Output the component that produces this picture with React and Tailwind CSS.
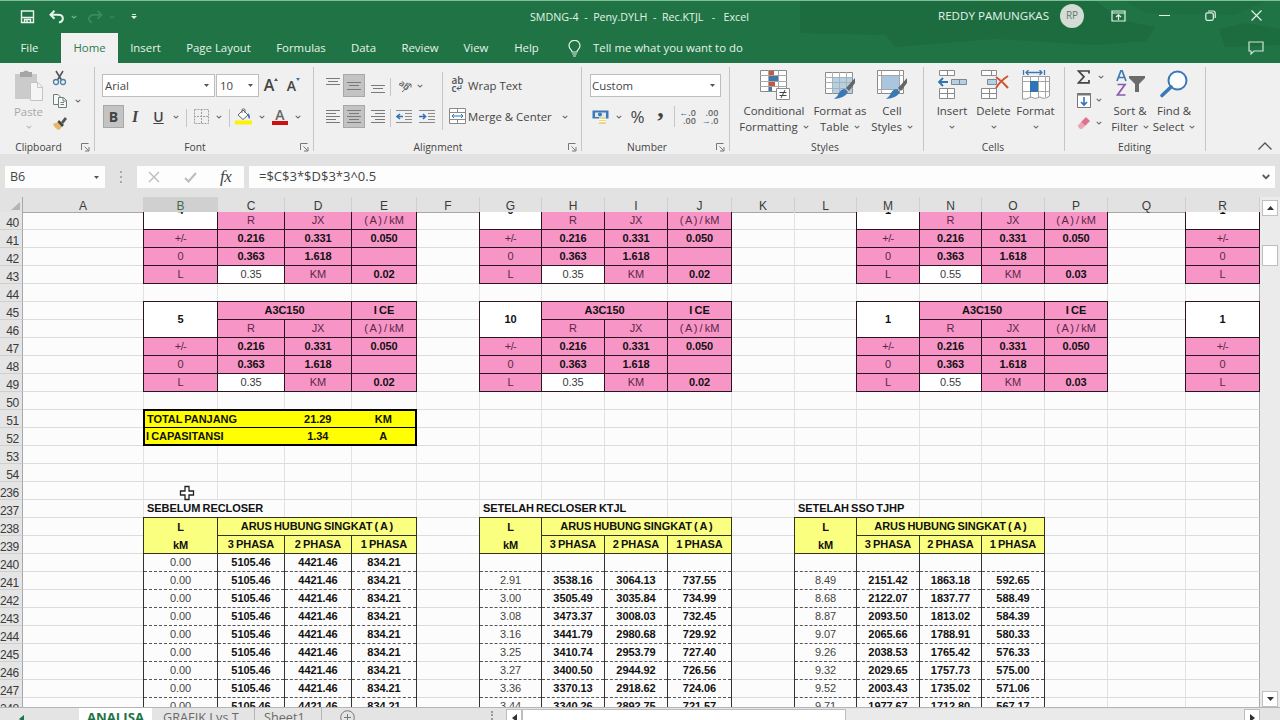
import clsx from 'clsx';

const COLS = 'ABCDEFGHIJKLMNOPQR'.split('');
const ROWS = [40, 41, 42, 43, 44, 45, 46, 47, 48, 49, 50, 51, 52, 53, 54, 236, 237, 238, 239, 240, 241, 242, 243, 244, 245, 246, 247, 248];
const GRID = 'grid grid-cols-[23px_121px_74px_67px_67px_65px_63px_62px_63px_63px_64px_63px_62px_63px_62px_63px_63px_78px_74px]';

// line constants of the feeder, one block per section
const BLOCKS = [
    { cols: ['B', 'C', 'D', 'E'], prev: '4', no: '5', length: '0.35', ice: '0.02' },
    { cols: ['G', 'H', 'I', 'J'], prev: '9', no: '10', length: '0.35', ice: '0.02' },
    { cols: ['M', 'N', 'O', 'P'], prev: '1', no: '1', length: '0.55', ice: '0.03' },
    { cols: ['R'], prev: '1', no: '1' }
];

const FAULTS = [
    {
        title: 'SEBELUM RECLOSER',
        cols: ['B', 'C', 'D', 'E'],
        data: Array(9).fill(['0.00', '5105.46', '4421.46', '834.21'])
    },
    {
        title: 'SETELAH RECLOSER KTJL',
        cols: ['G', 'H', 'I', 'J'],
        data: [
            ['', '', '', ''],
            ['2.91', '3538.16', '3064.13', '737.55'],
            ['3.00', '3505.49', '3035.84', '734.99'],
            ['3.08', '3473.37', '3008.03', '732.45'],
            ['3.16', '3441.79', '2980.68', '729.92'],
            ['3.25', '3410.74', '2953.79', '727.40'],
            ['3.27', '3400.50', '2944.92', '726.56'],
            ['3.36', '3370.13', '2918.62', '724.06'],
            ['3.44', '3340.26', '2892.75', '721.57']
        ]
    },
    {
        title: 'SETELAH SSO TJHP',
        cols: ['L', 'M', 'N', 'O'],
        data: [
            ['', '', '', ''],
            ['8.49', '2151.42', '1863.18', '592.65'],
            ['8.68', '2122.07', '1837.77', '588.49'],
            ['8.87', '2093.50', '1813.02', '584.39'],
            ['9.07', '2065.66', '1788.91', '580.33'],
            ['9.26', '2038.53', '1765.42', '576.33'],
            ['9.32', '2029.65', '1757.73', '575.00'],
            ['9.52', '2003.43', '1735.02', '571.06'],
            ['9.71', '1977.67', '1712.80', '567.17']
        ]
    }
];

function place(col, row, colSpan = 1, rowSpan = 1) {
    return {
        gridColumn: `${COLS.indexOf(col) + 2} / span ${colSpan}`,
        gridRow: `${ROWS.indexOf(row) + 1} / span ${rowSpan}`
    };
}

function Cell({ col, row, cs, rs, className, children }) {
    return (
        <div
            style={place(col, row, cs, rs)}
            className={clsx('-ml-px -mt-px flex items-center justify-center border whitespace-nowrap', className)}
        >
            {children}
        </div>
    );
}

function PinkRows({ cols, start, length, ice }) {
    const [a, b, c, d] = cols;
    const label = 'bg-[#f895c7] border-[#2a1420] text-[#5a2846]';
    const value = 'bg-[#f895c7] border-[#2a1420] font-bold';
    return (
        <>
            <Cell col={a} row={start} className={label}><span className="tracking-[-0.6px]">+/-</span></Cell>
            <Cell col={a} row={start + 1} className={label}>0</Cell>
            <Cell col={a} row={start + 2} className={label}>L</Cell>
            {b && (
                <>
                    <Cell col={b} row={start - 1} className={label}>R</Cell>
                    <Cell col={c} row={start - 1} className={label}>JX</Cell>
                    <Cell col={d} row={start - 1} className={label}>( A ) / kM</Cell>
                    <Cell col={b} row={start} className={value}>0.216</Cell>
                    <Cell col={c} row={start} className={value}>0.331</Cell>
                    <Cell col={d} row={start} className={value}>0.050</Cell>
                    <Cell col={b} row={start + 1} className={value}>0.363</Cell>
                    <Cell col={c} row={start + 1} className={value}>1.618</Cell>
                    <Cell col={d} row={start + 1} className={value} />
                    <Cell col={b} row={start + 2} className="border-[#2a1420] bg-white text-[#3c3c3c]">{length}</Cell>
                    <Cell col={c} row={start + 2} className={label}>KM</Cell>
                    <Cell col={d} row={start + 2} className={value}>{ice}</Cell>
                </>
            )}
        </>
    );
}

function LineBlock({ cols, prev, no, length, ice }) {
    const head = 'bg-[#f895c7] border-[#2a1420] font-bold';
    return (
        <>
            <div style={place(cols[0], 40)} className="-ml-px -mt-[19px] flex h-[37px] items-center justify-center border border-[#2a1420] bg-white pb-[3px] font-bold">{prev}</div>
            <PinkRows cols={cols} start={41} length={length} ice={ice} />
            <Cell col={cols[0]} row={45} rs={2} className="border-[#2a1420] bg-white font-bold">{no}</Cell>
            {cols[1] && (
                <>
                    <Cell col={cols[1]} row={45} cs={2} className={head}>A3C150</Cell>
                    <Cell col={cols[3]} row={45} className={head}>I CE</Cell>
                </>
            )}
            <PinkRows cols={cols} start={47} length={length} ice={ice} />
        </>
    );
}

function FaultTable({ title, cols, data }) {
    const head = 'bg-[#faff80] border-[#33331a] font-bold';
    return (
        <>
            <div style={place(cols[0], 237, 3)} className="mb-px flex items-center font-bold whitespace-nowrap">
                <span className="bg-[#fcfcfc] px-[3px] leading-[17px]">{title}</span>
            </div>
            <Cell col={cols[0]} row={238} rs={2} className={clsx(head, 'flex-col leading-[18px]')}>
                <span>L</span>
                <span>kM</span>
            </Cell>
            <Cell col={cols[1]} row={238} cs={3} className={head}>ARUS HUBUNG SINGKAT ( A )</Cell>
            <Cell col={cols[1]} row={239} className={head}>3 PHASA</Cell>
            <Cell col={cols[2]} row={239} className={head}>2 PHASA</Cell>
            <Cell col={cols[3]} row={239} className={head}>1 PHASA</Cell>
            {data.map((line, i) =>
                line.map((text, j) => (
                    <div
                        key={`${i}-${j}`}
                        style={place(cols[j], 240 + i)}
                        className="-ml-px flex border-x border-[#333] bg-[#fcfcfc]"
                    >
                        <div className={clsx('flex flex-1 items-center justify-center border-b border-dashed border-[#555]', j === 0 ? 'text-[#444]' : 'font-bold')}>
                            {text}
                        </div>
                    </div>
                ))
            )}
        </>
    );
}

function Sheet() {
    return (
        <div className="relative w-[1260px] font-['Liberation_Sans',sans-serif] text-[#111]">
            <div className={clsx(GRID, 'h-[15px] text-[12px] text-[#3a3a3a]')}>
                <div className="flex items-end justify-end border-r border-b border-[#a8a8a8] pr-0.5 pb-0.5">
                    <svg width="9" height="8"><path d="M9 0V8H0Z" fill="#b4b4b4" /></svg>
                </div>
                {COLS.map(c => (
                    <div
                        key={c}
                        className={clsx(
                            'flex items-center justify-center border-r border-b border-r-[#cfcfcf] pt-[3px] leading-none',
                            c === 'B' ? 'border-b-[#217346] bg-[#d0d0d0] text-[#3f6b52]' : 'border-b-[#a8a8a8]'
                        )}
                    >
                        {c}
                    </div>
                ))}
            </div>
            <div className={clsx(GRID, 'h-[495px] auto-rows-[18px] overflow-hidden bg-[#fcfcfc] text-[11px] tracking-[-0.06px] [word-spacing:-0.8px]')}>
                {ROWS.map((r, i) => (
                    <div
                        key={r}
                        style={{ gridColumn: 1, gridRow: i + 1 }}
                        className="flex items-end justify-end border-r border-b border-r-[#a8a8a8] border-b-[#cfcfcf] bg-[#e5e5e5] pr-[3px] text-[12px] leading-[12px] tracking-[-0.3px] text-[#3a3a3a]"
                    >
                        {r}
                    </div>
                ))}
                {ROWS.map(r =>
                    COLS.map(c => (
                        <div
                            key={c + r}
                            style={place(c, r)}
                            className={clsx('border-r border-b border-b-[#dcdcdc]', c === 'R' ? 'border-r-[#a8a8a8]' : 'border-r-[#e2e2e2]')}
                        />
                    ))
                )}
                {BLOCKS.map(b => <LineBlock key={b.cols[0]} {...b} />)}

                {/* totals */}
                <div style={place('B', 51, 4)} className="-ml-px -mt-px flex items-center border-2 border-b border-black bg-[#ffff00] font-bold">
                    <div className="w-[140px] pl-0.5">TOTAL PANJANG</div>
                    <div className="w-[68px] text-center">21.29</div>
                    <div className="w-[64px] text-center">KM</div>
                </div>
                <div style={place('B', 52, 4)} className="-ml-px -mt-px flex items-center border-2 border-t border-black bg-[#ffff00] font-bold">
                    <div className="w-[140px] pl-px">I CAPASITANSI</div>
                    <div className="w-[68px] text-center">1.34</div>
                    <div className="w-[64px] text-center">A</div>
                </div>

                {FAULTS.map(f => <FaultTable key={f.title} {...f} />)}
            </div>
            {/* mouse pointer */}
            <svg className="absolute top-[288px] left-[179px]" width="16" height="16" viewBox="0 0 16 16">
                <path d="M6 1.5h4V6h4.5v4H10v4.5H6V10H1.5V6H6Z" fill="#fff" stroke="#222" strokeWidth="1.3" />
            </svg>
        </div>
    );
}

function Chevron({ className = 'text-[#6e6e6e]' }) {
    return (
        <svg className={clsx('shrink-0', className)} width="6" height="4" viewBox="0 0 6 4">
            <path d="M.7 .8L3 2.9L5.3 .8" fill="none" stroke="currentColor" strokeWidth="1.1" />
        </svg>
    );
}

function Caret() {
    return <svg className="shrink-0" width="5" height="3"><path d="M0 0H5L2.5 3Z" fill="#555" /></svg>;
}

function Launcher() {
    return (
        <svg width="9" height="9" viewBox="0 0 9 9" fill="none" stroke="#777">
            <path d="M.5 7V.5H7.5M3.500 3.500L7.500 7.500M8 4V8H4" />
        </svg>
    );
}

function Group({ label, className, labelClass, launcher, children }) {
    return (
        <div className={clsx('flex h-[90px] shrink-0 flex-col', className)}>
            <div className="relative flex h-[76px]">
                {children}
            </div>
            <div className="flex h-[14px] items-center text-[10.3px] text-[#444]">
                <span className={clsx('flex-1 text-center leading-[14px]', labelClass)}>{label}</span>
                {launcher && <span className="mr-[4px] w-[9px]"><Launcher /></span>}
            </div>
        </div>
    );
}

function Divider({ className }) {
    return <div className={clsx('w-px shrink-0 self-start bg-[#c6c6c6]', className)} />;
}

function Slot({ className, children }) {
    return <div className={clsx('flex h-[23px] shrink-0 items-center justify-center', className)}>{children}</div>;
}

function AlignIcon({ lines, className }) {
    return (
        <svg className={className} width="14" height="14" viewBox="0 0 14 14" stroke="#7a7a7a" strokeWidth="1">
            {lines.map(([x1, x2, y]) => <path key={y} d={`M${x1} ${y}H${x2}`} />)}
        </svg>
    );
}

function BigButton({ icon, top, bottom, className }) {
    return (
        <div className={clsx('flex shrink-0 flex-col items-center pt-[6px] text-[#444]', className)}>
            <div className="flex h-[33px] items-start">{icon}</div>
            <div className="h-4 leading-4 whitespace-nowrap">{top}</div>
            <div className="flex h-4 items-center gap-[5px] leading-4 whitespace-nowrap">
                {bottom}
                <Chevron />
            </div>
        </div>
    );
}

function BrushMark() {
    return (
        <>
            <path d="M31 8L22 18L25 21L31 13Z" fill="#666" />
            <path d="M21 19L24 22Q21 28 10 29Q14 26 15 23Q17 19 21 19Z" fill="#3c78b4" />
        </>
    );
}

const conditionalIcon = (
    <svg width="32" height="32" viewBox="0 0 32 32">
        <path d="M2.5 .5H28.500V21.500H2.500Z" fill="#fff" stroke="#8a8a8a" />
        <path d="M10.500 0V21M20.500 0V21M2 5.500H29M2 11.500H29M2 16.500H29" stroke="#a8a8a8" />
        <path d="M11 1H16V5H11ZM11 12H17V16H11Z" fill="#c8583a" />
        <path d="M11 6H20V11H11ZM11 17H14V21H11Z" fill="#3f76b0" />
        <path d="M18.500 18.500H31.500V29.500H18.500Z" fill="#fff" stroke="#8a8a8a" />
        <path d="M21.500 22.500H28.500M21.500 25.500H28.500M27 20L23 28" stroke="#444" />
    </svg>
);

const tableIcon = (
    <svg width="32" height="32" viewBox="0 0 32 32">
        <path d="M1.500 2.500H28.500V23.500H1.500Z" fill="#fff" stroke="#8a8a8a" />
        <path d="M9 8H28V23H9Z" fill="#b5cfe3" />
        <path d="M8.500 2V24M15.500 2V24M22.500 2V24M1 7.500H29M1 12.500H29M1 18.500H29" stroke="#a9b1b8" />
        <BrushMark />
    </svg>
);

const cellStyleIcon = (
    <svg width="32" height="32" viewBox="0 0 32 32">
        <path d="M1.500 .500H27.500V23.500H1.500Z" fill="#fff" stroke="#8a8a8a" />
        <path d="M5.500 0V24M23.500 0V24M1 5.500H28M1 19.500H28" stroke="#a5a5a5" />
        <path d="M6 6H23V19H6Z" fill="#a9c6de" />
        <BrushMark />
    </svg>
);

const insertIcon = (
    <svg width="32" height="32" viewBox="0 0 32 32">
        <path d="M3.500 .500H18.500V5.500H3.500ZM11.500 0V6M3.500 18.500H18.500V28.500H3.500ZM11.500 18V29M3 23.500H19" fill="#fff" stroke="#8a8a8a" />
        <path d="M15.500 9.500H30.500V14.500H15.500ZM23.500 9V15" fill="#b5cfe3" stroke="#7a8894" />
        <path d="M12 12H3M7 8L3 12L7 16" fill="none" stroke="#2f74b5" strokeWidth="1.8" />
    </svg>
);

const deleteIcon = (
    <svg width="32" height="32" viewBox="0 0 32 32">
        <path d="M3.500 .500H18.500V5.500H3.500ZM13.500 0V6M3.500 18.500H18.500V28.500H3.500ZM11.500 18V29M3 23.500H19" fill="#fff" stroke="#8a8a8a" />
        <path d="M9.500 9.500H18.500V14.500H9.500Z" fill="#b5cfe3" stroke="#7a8894" />
        <path d="M18 7Q25 12 30 18M30 6Q22 11 18 18" fill="none" stroke="#d2532f" strokeWidth="2" />
    </svg>
);

const formatIcon = (
    <svg width="32" height="32" viewBox="0 0 32 32">
        <path d="M2.500 6.500H29.500V26Q24 30 20 27Q15 30 11 27Q6 30 2.500 29Z" fill="#fff" stroke="#9a9a9a" />
        <path d="M10.500 6V27M18.500 6V27M25.500 6V27M2 11.500H30M2 21.500H30" stroke="#a5a5a5" />
        <path d="M10 11H18V22H10Z" fill="#2f74b5" />
        <path d="M3.500 0V5M24.500 0V5M6 2.500H22M8.500 0L6 2.500L8.500 5M19.500 0L22 2.500L19.500 5" fill="none" stroke="#3c78b4" strokeWidth="1.300" />
    </svg>
);

const sortIcon = (
    <svg width="30" height="30" viewBox="0 0 30 30" fill="none">
        <path d="M2 11L6 0.500H7L11 11M3.500 7.500H9.500" stroke="#3c78b4" strokeWidth="1.700" />
        <path d="M2.500 14.500H10L2.500 25H10.500" stroke="#8a5aa8" strokeWidth="1.700" />
        <path d="M14 6H30V8L24 14V22H20V14L14 8Z" fill="#6b6b6b" />
    </svg>
);

const findIcon = (
    <svg width="30" height="30" viewBox="0 0 30 30" fill="none">
        <circle cx="18.500" cy="10.500" r="9" fill="#fbfdff" stroke="#3c78b4" strokeWidth="2" />
        <path d="M12 17L3 25.500" stroke="#3c78b4" strokeWidth="3.600" strokeLinecap="round" />
    </svg>
);

function TitleBar() {
    return (
        <div className="relative flex h-[33px] items-center border-t border-[#7fbf9a] text-[#e3f3e9]">
            <div className="flex w-[530px] items-center pl-[20px]">
                <svg width="15" height="14" viewBox="0 0 15 14" fill="none" stroke="#e8f5ed" strokeWidth="1.400">
                    <path d="M1.500 1H13.500V12.500H1.500ZM1.500 7.500H13.500M4.500 12.500V9.500H10.500V12.500M7 9.500V12" />
                </svg>
                <svg className="ml-[14px]" width="16" height="14" viewBox="0 0 16 14" fill="none" stroke="#e8f5ed" strokeWidth="2">
                    <path d="M5.500 0.800L1.500 4.800L5.500 8.800M1.500 4.800H9C15 4.800 15.500 11 10 12.500" />
                </svg>
                <Chevron className="ml-[6px] text-[#7db695]" />
                <svg className="ml-[10px]" width="16" height="14" viewBox="0 0 16 14" fill="none" stroke="#3b8a5f" strokeWidth="1.800">
                    <path d="M10.500 0.800L14.500 4.800L10.500 8.800M14.500 4.800H7C1 4.800 0.500 11 5 12.500" />
                </svg>
                <Chevron className="ml-[6px] text-[#3b8a5f]" />
                <svg className="ml-[16px]" width="6" height="6"><path d="M1 0.500H5" stroke="#d5eadd" /><path d="M0 2H6L3 5Z" fill="#e8f5ed" /></svg>
            </div>
            <div className="w-[408px] text-[10.7px] whitespace-pre">SMDNG-4  -  Peny.DYLH  -  Rec.KTJL   -   Excel</div>
            <div className="w-[122px] pb-[3px] text-[11.6px] whitespace-nowrap">REDDY PAMUNGKAS</div>
            <div className="mb-[3px] flex h-6 w-6 items-center justify-center rounded-full bg-[#d3dcd5] text-[10px] text-[#68786d]">RP</div>
            <svg className="mb-[3px] ml-[27px]" width="15" height="12" viewBox="0 0 15 12" fill="none" stroke="#e3f3e9" strokeWidth="1.200">
                <path d="M1 1H14V11H1ZM1 3H14M7.500 10V5M5 7L7.500 4.800L10 7" />
            </svg>
            <svg className="mb-[3px] ml-[33px]" width="11" height="12" stroke="#e3f3e9"><path d="M0 5.500H11" /></svg>
            <svg className="mb-[3px] ml-[35px]" width="11" height="11" viewBox="0 0 11 11" fill="none" stroke="#e3f3e9" strokeWidth="1.200">
                <rect x="0.800" y="2.800" width="7.500" height="7.500" rx="1.500" />
                <path d="M3 1H8Q10.200 1 10.200 3V8" />
            </svg>
            <svg className="mb-[3px] ml-[35px]" width="11" height="11" stroke="#e3f3e9" strokeWidth="1.200"><path d="M0.500 0.500L10.500 10.500M10.500 0.500L0.500 10.500" /></svg>
        </div>
    );
}

function MenuBar() {
    const tabs = [
        ['Insert', 'w-[55px]'],
        ['Page Layout', 'w-[91px]'],
        ['Formulas', 'w-[74px]'],
        ['Data', 'w-[51px]'],
        ['Review', 'w-[62px]'],
        ['View', 'w-[50px]'],
        ['Help', 'w-[51px]']
    ];
    return (
        <div className="relative flex h-[30px] items-stretch text-[11.4px] text-[#e6f4eb]">
            <div className="flex w-[61px] items-center justify-center pr-0.5">File</div>
            <div className="flex w-[57px] items-center justify-center bg-[#f1f1f1] text-[#2d7a50]">Home</div>
            {tabs.map(([name, width]) => (
                <div key={name} className={clsx('flex items-center justify-center whitespace-nowrap', width)}>{name}</div>
            ))}
            <div className="flex flex-1 items-center pl-[16px]">
                <svg width="13" height="17" viewBox="0 0 13 17" fill="none" stroke="#e6f4eb" strokeWidth="1.200">
                    <path d="M4 12C4 9.500 1 9 1 5.800A5.300 5.300 0 0 1 12 5.800C12 9 9 9.500 9 12ZM4.200 14H8.800M5 16H8" />
                </svg>
                <span className="ml-[12px]">Tell me what you want to do</span>
            </div>
            <svg className="mt-[8px] mr-[16px]" width="16" height="14" viewBox="0 0 16 14" fill="none" stroke="#cfe6d8" strokeWidth="1.200">
                <path d="M1 1H15V10H6L3 13V10H1Z" />
            </svg>
        </div>
    );
}

function Ribbon() {
    return (
        <div className="flex h-[91px] bg-[#f0f0f0] pt-px text-[11.4px] text-[#444]">
            <Group label="Clipboard" className="w-[94px]" labelClass="pr-[4px]" launcher>
                <div className="flex w-[52px] flex-col items-center pt-[6px] pl-[5px] text-[#a8a8a8]">
                    <svg width="30" height="31" viewBox="0 0 30 31">
                        <path d="M1 4H23V29H1Z" fill="#cbcbcb" />
                        <path d="M6 2H9Q12 -1 15 2H18V7H6Z" fill="#a5a5a5" />
                        <path d="M16.500 12.500H24L28.500 17V30.500H16.500Z" fill="#f5f5f5" stroke="#c4c4c4" />
                        <path d="M23.500 12.500V17.500H28.500" fill="none" stroke="#c4c4c4" />
                    </svg>
                    <div className="mt-[3px] h-4 leading-4">Paste</div>
                    <Chevron className="mt-[5px] text-[#bbb]" />
                </div>
                <div className="flex flex-col gap-[7px] pt-[6px]">
                    <svg width="15" height="16" viewBox="0 0 15 16" fill="none">
                        <path d="M4 1L9.500 10M11 1L5.500 10" stroke="#555" strokeWidth="1.600" />
                        <circle cx="4" cy="12" r="2.500" stroke="#4a82a8" strokeWidth="1.300" />
                        <circle cx="11" cy="12" r="2.500" stroke="#4a82a8" strokeWidth="1.300" />
                    </svg>
                    <div className="flex items-center gap-[7px]">
                        <svg width="16" height="16" viewBox="0 0 16 16" fill="#f7f7f7" stroke="#6d7f7a">
                            <path d="M1.500 1.500H6L8.500 4V11.500H1.500Z" />
                            <path d="M6.500 4.500H11.500L14.500 7.500V14.500H6.500ZM11 4.500V8H14.500M8.500 9.500H12M8.500 11.500H12" />
                        </svg>
                        <Chevron />
                    </div>
                    <svg width="16" height="16" viewBox="0 0 16 16">
                        <path d="M1 8L6 6L10 11L7 14Q3 13 1 8Z" fill="#e5b867" />
                        <path d="M7 4L12 9L10 11L5.500 6Z" fill="#444" />
                        <path d="M9 6L13 1L15 3L11 8Z" fill="#555" />
                    </svg>
                </div>
            </Group>
            <Divider className="mt-[3px] h-[84px]" />

            <Group label="Font" className="w-[218px]" labelClass="pr-[5px]" launcher>
                <div className="flex flex-col gap-[8px] pt-[10px]">
                    <div className="flex">
                        <div className="ml-[7px] flex h-[23px] w-[113px] items-center justify-between border border-[#bdbdbd] bg-white pr-[5px] pl-0.5">Arial<Caret /></div>
                        <div className="ml-px flex h-[23px] w-[43px] items-center justify-between border border-[#bdbdbd] bg-white pr-[5px] pl-[3px]">10<Caret /></div>
                        <Slot className="w-[24px] items-start text-[16px] leading-[22px] font-semibold">A<svg className="mt-[4px]" width="4" height="3"><path d="M0 3L2 0L4 3Z" fill="#555" /></svg></Slot>
                        <Slot className="w-[21px] items-start text-[14px] leading-[23px] font-semibold">A<svg className="mt-[4px]" width="4" height="3"><path d="M0 0L2 3L4 0Z" fill="#3c78b4" /></svg></Slot>
                    </div>
                    <div className="flex">
                        <Slot className="ml-[8px] w-[21px] border border-[#a8a8a8] bg-[#c3c3c3] text-[14px] font-bold">B</Slot>
                        <Slot className="w-[22px] font-['Liberation_Serif',serif] text-[16px] font-bold italic">I</Slot>
                        <Slot className="w-[25px] text-[14px] font-semibold underline">U</Slot>
                        <Slot className="w-[10px]"><Chevron /></Slot>
                        <Slot className="w-[11px]"><Divider className="mt-1 h-[18px]" /></Slot>
                        <Slot className="w-[18px]">
                            <svg width="15" height="15" viewBox="0 0 15 15" fill="none" stroke="#a0a0a0">
                                <path d="M0.500 0.500H14.500V14.500H0.500ZM7.500 0V15M0 7.500H15" strokeDasharray="2 1" />
                            </svg>
                        </Slot>
                        <Slot className="w-[17px]"><Chevron /></Slot>
                        <Slot className="w-[4px]"><Divider className="mt-1 h-[18px]" /></Slot>
                        <Slot className="w-[24px]">
                            <svg width="17" height="17" viewBox="0 0 17 17">
                                <path d="M0 12.500H17V16.500H0Z" fill="#fff200" />
                                <path d="M3 7L8 2L13 7L8 11.500Z" fill="#fff" stroke="#666" />
                                <path d="M7 5V1.500Q8.500 0 10 1.500V5" fill="none" stroke="#666" />
                                <path d="M13 5Q16 8 14.500 11Q12.500 10 13 5Z" fill="#3c78b4" />
                            </svg>
                        </Slot>
                        <Slot className="w-[13px]"><Chevron /></Slot>
                        <Slot className="w-[24px] flex-col">
                            <span className="text-[14px] leading-[13px] font-semibold text-[#666]">A</span>
                            <span className="h-[4px] w-[16px] bg-[#d01010]" />
                        </Slot>
                        <Slot className="w-[12px]"><Chevron /></Slot>
                    </div>
                </div>
            </Group>
            <Divider className="mt-[3px] h-[84px]" />

            <Group label="Alignment" className="w-[267px]" labelClass="pr-[6px]" launcher>
                <div className="flex w-[128px] flex-col gap-[8px] pt-[10px] pl-[8px]">
                    <div className="flex">
                        <Slot className="w-[21px]"><AlignIcon className="mb-[7px]" lines={[[0, 14, 3.5], [2, 12, 6.5], [0, 14, 9.5]]} /></Slot>
                        <Slot className="w-[22px] border border-[#a8a8a8] bg-[#c3c3c3]"><AlignIcon lines={[[0, 14, 3.5], [2, 12, 6.5], [0, 14, 10.5]]} /></Slot>
                        <Slot className="w-[25px]"><AlignIcon className="mt-[5px]" lines={[[0, 14, 4.5], [2, 12, 7.5], [0, 14, 11.5]]} /></Slot>
                        <Slot className="w-px"><Divider className="mt-1 h-[18px]" /></Slot>
                        <Slot className="w-[27px]">
                            <svg className="overflow-visible" width="14" height="14" viewBox="0 0 14 14">
                                <text x="0" y="8" fontSize="9" fontWeight="600" fill="#666" transform="rotate(38 4 7)">ab</text>
                                <path d="M4 13L13 5M13 5H9.500M13 5V8.500" fill="none" stroke="#666" />
                            </svg>
                        </Slot>
                        <Slot className="w-[4px]"><Chevron /></Slot>
                    </div>
                    <div className="flex">
                        <Slot className="w-[21px]"><AlignIcon lines={[[0, 14, 0.5], [0, 10, 3.5], [0, 14, 6.5], [0, 10, 9.5], [0, 14, 12.5]]} /></Slot>
                        <Slot className="w-[22px] border border-[#a8a8a8] bg-[#c3c3c3]"><AlignIcon lines={[[0, 14, 0.5], [2, 12, 3.5], [0, 14, 6.5], [2, 12, 9.5], [0, 14, 12.5]]} /></Slot>
                        <Slot className="w-[25px]"><AlignIcon lines={[[0, 14, 0.5], [4, 14, 3.5], [0, 14, 6.5], [4, 14, 9.5], [0, 14, 12.5]]} /></Slot>
                        <Slot className="w-px"><Divider className="mt-1 h-[18px]" /></Slot>
                        <Slot className="w-[26px]">
                            <svg width="16" height="14" viewBox="0 0 16 14" fill="none">
                                <path d="M0 0.500H16M9 3.500H16M9 6.500H16M9 9.500H16M0 12.500H16" stroke="#8a8a8a" />
                                <path d="M7 6.500H1M4 4L1 6.500L4 9" stroke="#2f74b5" strokeWidth="1.600" />
                            </svg>
                        </Slot>
                        <Slot className="w-[20px]">
                            <svg width="16" height="14" viewBox="0 0 16 14" fill="none">
                                <path d="M0 0.500H16M9 3.500H16M9 6.500H16M9 9.500H16M0 12.500H16" stroke="#8a8a8a" />
                                <path d="M0 6.500H6.500M4 4L6.500 6.500L4 9" stroke="#2f74b5" strokeWidth="1.600" />
                            </svg>
                        </Slot>
                    </div>
                </div>
                <Divider className="mt-[8px] h-[58px]" />
                <div className="flex flex-col gap-[8px] pt-[10px] pl-[6px]">
                    <div className="flex">
                        <Slot className="w-[17px]">
                            <div className="h-[19px] text-[10px] leading-[8px] font-semibold text-[#555]">
                                <div>ab</div>
                                <div className="flex">c<svg width="6" height="7" fill="none" stroke="#3c5f80"><path d="M5 1V4.500H1M3 2.500L1 4.500L3 6.500" /></svg></div>
                            </div>
                        </Slot>
                        <Slot className="ml-[2px]">Wrap Text</Slot>
                    </div>
                    <div className="flex">
                        <Slot className="w-[17px]">
                            <svg width="17" height="17" viewBox="0 0 17 17" fill="#fff" stroke="#8a8a8a">
                                <path d="M0.500 0.500H16.500V15.500H0.500ZM8.500 0V4M8.500 12V16M0 4.500H17M0 11.500H17" />
                                <path d="M3 8H14M5 6L3 8L5 10M12 6L14 8L12 10" fill="none" stroke="#2f74b5" />
                            </svg>
                        </Slot>
                        <Slot className="ml-[2px] w-[85px] justify-start whitespace-nowrap">Merge &amp; Center</Slot>
                        <Slot className="ml-[9px]"><Chevron /></Slot>
                    </div>
                </div>
            </Group>
            <Divider className="mt-[3px] h-[84px]" />

            <Group label="Number" className="w-[147px]" labelClass="pr-[4px]" launcher>
                <div className="flex flex-col gap-[8px] pt-[10px] pl-[8px]">
                    <div className="flex h-[23px] w-[131px] items-center justify-between border border-[#bdbdbd] bg-white pr-[5px] pl-px">Custom<Caret /></div>
                    <div className="flex">
                        <Slot className="w-[21px]">
                            <svg width="17" height="16" viewBox="0 0 17 16">
                                <path d="M0.500 1.500H16.500V9.500H0.500Z" fill="#3c78b4" />
                                <path d="M3 3.500H14V8H3Z" fill="#dce9f4" />
                                <circle cx="8" cy="5.500" r="2" fill="#3c78b4" />
                                <path d="M7 8H14V15H7Z" fill="#ecd48a" />
                                <path d="M7 10.500H14M7 12.500H14" stroke="#fff" />
                            </svg>
                        </Slot>
                        <Slot className="w-[15px]"><Chevron /></Slot>
                        <Slot className="w-[23px] text-[17px]">%</Slot>
                        <Slot className="w-[23px] pb-[16px] font-['Liberation_Serif',serif] text-[26px] font-bold">,</Slot>
                        <Slot className="w-[4px]"><Divider className="mt-px h-[21px]" /></Slot>
                        <Slot className="w-[23px]">
                            <div className="text-right text-[9px] leading-[8px] font-semibold text-[#666]">
                                <div><span className="text-[#2f74b5]">←</span>.0</div>
                                <div>.00</div>
                            </div>
                        </Slot>
                        <Slot className="w-[22px]">
                            <div className="text-right text-[9px] leading-[8px] font-semibold text-[#666]">
                                <div>.00</div>
                                <div><span className="text-[#2f74b5]">→</span>.0</div>
                            </div>
                        </Slot>
                    </div>
                </div>
            </Group>
            <Divider className="mt-[3px] h-[84px]" />

            <Group label="Styles" className="w-[193px]" labelClass="pr-[3px]">
                <BigButton icon={conditionalIcon} top="Conditional" bottom="Formatting" className="w-[88px]" />
                <BigButton icon={tableIcon} top="Format as" bottom="Table" className="w-[44px]" />
                <BigButton icon={cellStyleIcon} top="Cell" bottom="Styles" className="w-[60px]" />
            </Group>
            <Divider className="mt-[3px] h-[84px]" />

            <Group label="Cells" className="w-[140px]" labelClass="pr-[2px]">
                <BigButton icon={insertIcon} top="Insert" className="w-[56px]" />
                <BigButton icon={deleteIcon} top="Delete" className="w-[27px]" />
                <BigButton icon={formatIcon} top="Format" className="w-[57px]" />
            </Group>
            <Divider className="mt-[3px] h-[84px]" />

            <Group label="Editing" className="w-[140px]" labelClass="pr-[1px]">
                <div className="flex w-[42px] flex-col gap-[7px] pt-[5px] pl-[12px]">
                    <div className="flex h-4 items-center gap-[8px]">
                        <svg width="13" height="14" viewBox="0 0 13 14" fill="none" stroke="#444" strokeWidth="1.700">
                            <path d="M12 3.500V1H1.500L7 6.800L1.500 12.800H12V10" />
                        </svg>
                        <Chevron />
                    </div>
                    <div className="flex h-4 items-center gap-[5px]">
                        <svg width="14" height="15" viewBox="0 0 14 15" fill="none">
                            <path d="M0.500 0.500H13.500V14.500H0.500Z" fill="#fff" stroke="#777" />
                            <path d="M0 1.500H14" stroke="#777" strokeWidth="2" />
                            <path d="M7 4V12M4 9L7 12L10 9" stroke="#2f74b5" strokeWidth="1.600" />
                        </svg>
                        <Chevron />
                    </div>
                    <div className="flex h-4 items-center gap-[5px]">
                        <svg width="14" height="14" viewBox="0 0 14 14">
                            <path d="M9 1L13 5L8 10L4 6Z" fill="#e0718f" />
                            <path d="M4 6L8 10L5 13H3L0.500 10Z" fill="#eda5b6" />
                        </svg>
                        <Chevron />
                    </div>
                </div>
                <BigButton icon={sortIcon} top="Sort &amp;" bottom="Filter" className="w-[46px]" />
                <BigButton icon={findIcon} top="Find &amp;" bottom="Select" className="w-[42px]" />
            </Group>
            <Divider className="mt-[3px] h-[84px]" />
            <div className="flex flex-1 items-end justify-end pr-[8px] pb-[4px]">
                <svg width="14" height="8" fill="none" stroke="#555" strokeWidth="1.300"><path d="M0.500 7.500L7 1L13.500 7.500" /></svg>
            </div>
        </div>
    );
}

function FormulaBar() {
    return (
        <div className="flex h-[43px] items-start bg-[#e2e2e2] pt-[12px] pl-[5px] text-[13px] text-[#444]">
            <div className="flex h-[22px] w-[100px] items-center justify-between bg-[#fdfdfd] pr-[6px] pl-[5px] text-[12.5px]">B6<Caret /></div>
            <div className="flex h-[22px] w-[32px] flex-col items-center justify-center gap-[3px]">
                <span className="h-0.5 w-0.5 bg-[#aaa]" />
                <span className="h-0.5 w-0.5 bg-[#aaa]" />
                <span className="h-0.5 w-0.5 bg-[#aaa]" />
            </div>
            <div className="flex h-[22px] w-[107px] items-center bg-[#fdfdfd] pl-[11px]">
                <svg width="12" height="12" stroke="#bbb" strokeWidth="1.400"><path d="M1 1L11 11M11 1L1 11" /></svg>
                <svg className="ml-[24px]" width="13" height="11" fill="none" stroke="#bbb" strokeWidth="2"><path d="M1 6L4.500 9.500L12 1" /></svg>
                <span className="ml-[23px] font-['Liberation_Serif',serif] text-[17px] tracking-[-0.5px] italic">fx</span>
            </div>
            <div className="ml-[5px] flex h-[22px] w-[1026px] items-center justify-between bg-[#fdfdfd] pr-[5px] pl-[10px]">
                =$C$3*$D$3*3^0.5
                <svg width="8" height="6" fill="none" stroke="#555" strokeWidth="1.800"><path d="M0.800 1L4 4.300L7.200 1" /></svg>
            </div>
        </div>
    );
}

function VerticalScroll() {
    return (
        <div className="flex w-[20px] flex-col items-center bg-[#ebebeb] pt-[3px]">
            <div className="flex h-4 w-4 items-center justify-center border border-[#c0c0c0] bg-white">
                <svg width="7" height="4"><path d="M0 4L3.500 0L7 4Z" fill="#333" /></svg>
            </div>
            <div className="mt-[29px] h-[21px] w-4 border border-[#bdbdbd] bg-white" />
            <div className="mt-auto flex h-4 w-4 items-center justify-center border border-[#c0c0c0] bg-white">
                <svg width="7" height="4"><path d="M0 0L3.500 4L7 0Z" fill="#333" /></svg>
            </div>
        </div>
    );
}

function TabBar() {
    return (
        <div className="flex h-[13px] items-start overflow-hidden border-t border-[#b5b5b5] bg-[#e4e4e4] text-[12.7px] leading-[18px] text-[#6a6a6a]">
            <svg className="mt-[7px] ml-[19px]" width="5" height="8"><path d="M5 0V8L0 4Z" fill="#217346" /></svg>
            <span className="ml-[37px] w-[18px] font-bold">...</span>
            <div className="w-[73px] bg-white text-center text-[13.2px] font-bold text-[#217346]">ANALISA</div>
            <div className="w-[103px] border-r border-[#b5b5b5] pl-[11px] whitespace-nowrap">GRAFIK I vs T</div>
            <div className="w-[67px] border-r border-[#b5b5b5] pl-[9px]">Sheet1</div>
            <svg className="mt-[2px] ml-[18px]" width="15" height="15" viewBox="0 0 15 15" fill="none" stroke="#777">
                <circle cx="7.500" cy="7.500" r="6.800" />
                <path d="M7.500 4V11M4 7.500H11" />
            </svg>
            <div className="mt-[3px] ml-[136px] h-3 border-l-2 border-dotted border-[#999]" />
            <div className="mt-px ml-[13px] flex h-4 w-4 justify-center border border-[#bdbdbd] bg-white pt-[4px]">
                <svg width="5" height="8"><path d="M5 0V8L0 4Z" fill="#333" /></svg>
            </div>
            <div className="mt-px h-4 w-[324px] border border-[#bdbdbd] bg-white" />
            <div className="mt-px h-4 w-[398px] bg-[#eaeaea]" />
            <div className="mt-px flex h-4 w-4 justify-center border border-[#bdbdbd] bg-white pt-[4px]">
                <svg width="5" height="8"><path d="M0 0V8L5 4Z" fill="#333" /></svg>
            </div>
        </div>
    );
}

export default function App() {
    return (
        <div className="flex h-[720px] w-[1280px] flex-col overflow-hidden bg-[#e2e2e2] font-['Open_Sans','Noto_Sans',sans-serif]">
            <div className="relative bg-[#1f7344]">
                {/* faint theme artwork behind the window buttons */}
                <svg className="absolute top-px left-[795px]" width="485" height="62" viewBox="0 0 485 62" fill="#1c673e">
                    <path d="M5 0H300L330 20L360 26L352 40L300 44L200 38L100 46L90 34L5 32Z" opacity="0.6" />
                    <path d="M330 0H470L440 14L350 12Z" opacity="0.4" />
                    <path d="M424 28L450 22L485 28V44L430 46Z" opacity="0.6" />
                </svg>
                <TitleBar />
                <MenuBar />
            </div>
            <Ribbon />
            <FormulaBar />
            <div className="flex">
                <Sheet />
                <VerticalScroll />
            </div>
            <TabBar />
        </div>
    );
}
